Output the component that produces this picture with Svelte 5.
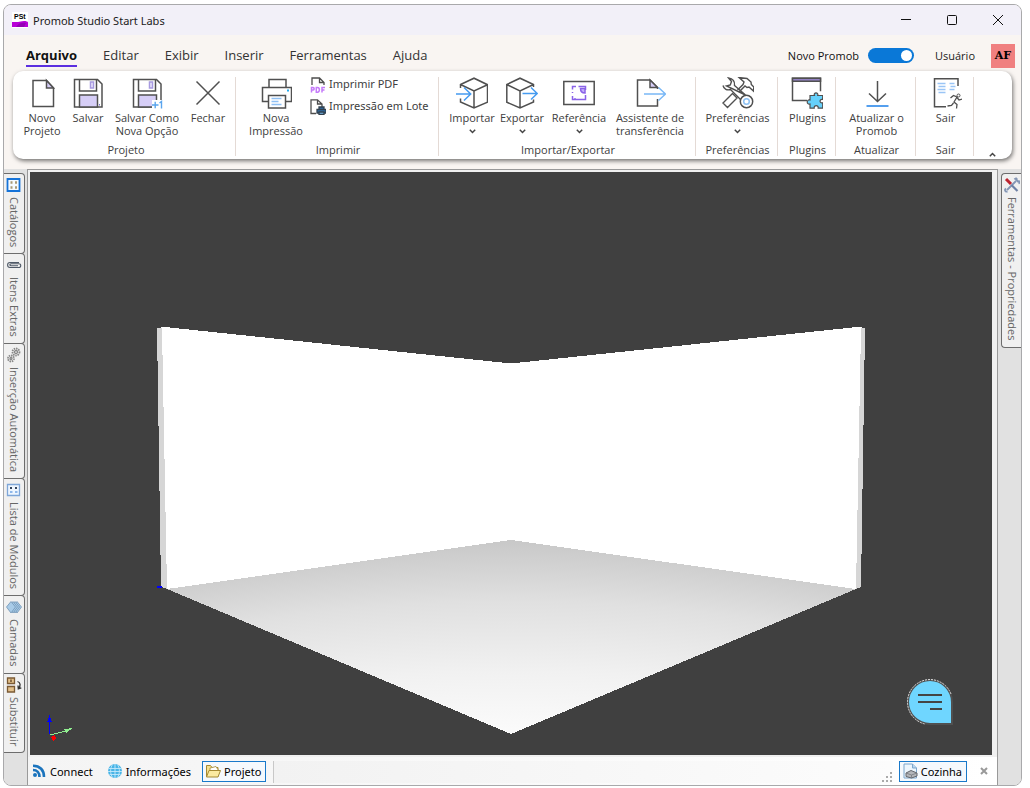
<script>
    const menu = ['Arquivo', 'Editar', 'Exibir', 'Inserir', 'Ferramentas', 'Ajuda'];

    const groups = [
        { id: 'project', label: 'Projeto', tools: [
            { icon: 'new', label: 'Novo Projeto' },
            { icon: 'save', label: 'Salvar' },
            { icon: 'saveAs', label: 'Salvar Como Nova Opção' },
            { icon: 'close', label: 'Fechar' }
        ] },
        { id: 'print', label: 'Imprimir', tools: [
            { icon: 'print', label: 'Nova Impressão' }
        ], small: [
            { icon: 'pdf', label: 'Imprimir PDF' },
            { icon: 'batch', label: 'Impressão em Lote' }
        ] },
        { id: 'transfer', label: 'Importar/Exportar', tools: [
            { icon: 'import', label: 'Importar', more: true },
            { icon: 'export', label: 'Exportar', more: true },
            { icon: 'reference', label: 'Referência', more: true },
            { icon: 'assistant', label: 'Assistente de transferência' }
        ] },
        { id: 'prefs', label: 'Preferências', tools: [{ icon: 'tools', label: 'Preferências', more: true }] },
        { id: 'plugins', label: 'Plugins', tools: [{ icon: 'plugins', label: 'Plugins' }] },
        { id: 'update', label: 'Atualizar', tools: [{ icon: 'update', label: 'Atualizar o Promob' }] },
        { id: 'exit', label: 'Sair', tools: [{ icon: 'exit', label: 'Sair' }] }
    ];

    const sideTabs = [
        { icon: 'catalog', label: 'Catálogos' },
        { icon: 'clip', label: 'Itens Extras' },
        { icon: 'gears', label: 'Inserção Automática' },
        { icon: 'list', label: 'Lista de Módulos' },
        { icon: 'layers', label: 'Camadas' },
        { icon: 'swap', label: 'Substituir' }
    ];

    let active = $state('Arquivo');
    let newPromob = $state(true);
</script>

{#snippet toolIcon(name)}
    <svg class="tool-icon" viewBox="0 0 32 32" fill="none" stroke="#505050" stroke-width="1.5" aria-hidden="true">
        {#if name === 'new'}
            <path d="M7 3.5h13.5l7 7.5v18.500H7z" />
            <path d="M20.5 3.5V11h7z" fill="#d6cef7" />
        {:else if name === 'save' || name === 'saveAs'}
            <path d="M2.5 2.5h23L30 7v23H2.5z" />
            <path d="M7.500 2.500V14h17V2.500" />
            <path d="M7.500 30V18h18v12z" fill="#d6cef7" />
            <path d="M18.500 5h3v6h-3z" fill="#ece7fc" stroke="#a79ae0" />
            {#if name === 'saveAs'}
                <path d="M21 23h11v9H21z" fill="#fff" stroke="none" />
                <path d="M21 28h6.500M24.200 24.700v6.600M28.500 26l2-1.500v7" stroke="#5aa5ee" stroke-width="1.4" />
            {:else}
                <path d="M27.500 27v1.500" stroke="#7d6fd0" stroke-width="1" />
            {/if}
        {:else if name === 'close'}
            <path d="M4.500 4.500l23 23M27.500 4.500l-23 23" />
        {:else if name === 'print'}
            <path d="M9 10V2.500h17V10M8 24.500H2.500V10.500h29v14H26" />
            <path d="M8.500 18.500h17V31h-17z" />
            <path d="M11.500 21.500h10M11.500 24.500h7M11.500 27.500h10" stroke="#8fc0f4" />
            <path d="M27 13.500h2" stroke="#23a9ee" stroke-width="2" />
        {:else if name === 'import'}
            <path d="M4.500 11V7.500L18 1.200l13.500 6.500v17.500L18 31 4.500 25v-3.500M4.500 7.500L18 14l13.500-6.300M18 14v17" />
            <path d="M0 17h14.500M8 10.500l6.700 6.500L8 23.500" stroke="#459bf0" />
        {:else if name === 'export'}
            <path d="M27.500 10V7.500L14 1.200.8 7.500v17.700L14 31l13.500-6v-2.500M.8 7.500L14 14l13.500-6.500M14 14v17" />
            <path d="M16.500 16.500H31M25 10.500l6.200 6-6.200 6" stroke="#459bf0" />
        {:else if name === 'reference'}
            <path d="M.8 4.500h30.400v23H.8z" />
            <path d="M13 9.500H9.500v3M9.500 19v3.500h13V18M15.500 9.500h7v3.500M9.500 15v1M13 22h-2" stroke="#8a63e8" />
            <path d="M17.500 11.500c0 3 2 4.500 4.500 4.500v-4.500z" fill="#c4b0fa" stroke="#8a63e8" />
        {:else if name === 'assistant'}
            <path d="M23.500 12V10.500L16 3H3.500v26h20v-7" />
            <path d="M16 3v7.500h7.500z" fill="#d6cef7" />
            <path d="M10 17h21.500M24.500 10.500l7 6.500-7 6.500" stroke="#7ab8f6" />
        {:else if name === 'tools'}
            <path d="M10.500 16.500L1 26l4.500 4.500L15 21zM17 15l6-6 2 1.500 2-.5 4.500 4 .3-4-2.500-2.500-.3-2.500-4-3.500-8-1 5 4.500-1 2.500-5.500 5.500" stroke-width="1.400" />
            <path d="M1 8.500c1 4 4 5 7.500 4l10.500 10.500M23.500 18L12.500 8.500C13 4.500 11 1.500 6.500 1l3 3.500L8.300 8 4.500 9z" stroke-width="1.400" />
            <circle cx="24.5" cy="24.500" r="6.200" fill="#fff" />
            <circle cx="24.5" cy="24.500" r="2.800" stroke="#8cc0f3" />
        {:else if name === 'plugins'}
            <path d="M16 23.500H1.500V1.200h28v13" />
            <path d="M1.500 1.200h28v3h-28z" fill="#9382c4" />
            <path d="M19 18.500h4.500c-1.500-3.500 4.500-3.500 3.200 0h5v4c-3.500-1-3.500 4.500 0 3.200v5.500h-4.500c.5-3.500-4.500-3.500-4 0H19V27c-3.700 1-3.700-5 0-4z" fill="#66d1fb" stroke-width="1.200" />
        {:else if name === 'update'}
            <path d="M16.500 4v20.500M8 16.500l8.500 8 8.500-8" />
            <path d="M5.500 29h22" stroke="#549fee" stroke-width="1.800" />
        {:else if name === 'exit'}
            <path d="M28 9V1.800H4.500v28H16" />
            <path d="M7.500 6.500h8M8.500 9.500h7M7.500 12.500h8M8.500 15.500h7M19.500 6.500h5M20.500 9.500h5M19.500 12.500h5" stroke="#9ac5f6" />
            <circle cx="28.500" cy="18.500" r="1.500" stroke-width="1" />
            <path d="M20.500 21l3-2.500 3.500 1.500-3 5 3 2.500-.5 4M23.500 26l-2 2.500-4 .5M27 20.500l2 2.500 3-1" stroke-width="1.300" />
        {/if}
    </svg>
{/snippet}

{#snippet smallIcon(name)}
    <svg class="small-icon" viewBox="0 0 16 16" fill="none" stroke="#4d4d4d" stroke-width="1.3" aria-hidden="true">
        {#if name === 'pdf'}
            <path d="M2 8V1h7.500L14 5.500V8M9.500 1v4.500H14" />
            <path d="M1.500 15.500v-5h1.700c1.300 0 1.300 2.600 0 2.600H1.500M6.300 10.500v4.700h1.200c2.500 0 2.500-4.700 0-4.700zM12 15.500v-5h3M12 13h2.500" stroke="#c57bfa" stroke-width="1.500" />
        {:else if name === 'batch'}
            <path d="M6 14.500H1V.8h6.500L12 5v3M7.500.8V5H12" />
            <path d="M7 10.500h9v3.500H7zM9 8h5v2.500H9z" fill="#2d6da8" stroke="#31404e" />
            <path d="M9 13h5v2.500H9z" fill="#79b7e8" stroke="#31404e" />
        {:else if name === 'catalog'}
            <path d="M1.500 2h12v12h-12z" fill="#f5fbff" stroke="#1673d8" stroke-width="1.8" />
            <path d="M4.500 5.500h2M9 5.500h2M4.500 10.500h2M9 10.500h2" stroke="#a89a77" stroke-width="2.400" />
        {:else if name === 'clip'}
            <path d="M13 5.500H4C.8 5.500.8 10.500 4 10.500h8.500c3 0 3-3.700 0-3.700H5c-1.500 0-1.500 2 0 2h7" stroke="#4f5967" stroke-width="1.100" />
        {:else if name === 'gears'}
            <circle cx="10" cy="5" r="3.500" stroke="#888" stroke-width="1.800" stroke-dasharray="1.500 .8" />
            <circle cx="10" cy="5" r="1.500" stroke="#888" />
            <circle cx="5" cy="11.500" r="3" stroke="#888" stroke-width="1.800" stroke-dasharray="1.500 .8" />
            <circle cx="5" cy="11.500" r="1" stroke="#888" />
        {:else if name === 'list'}
            <path d="M1.500 2.500h12v11h-12z" fill="#eef6ff" stroke="#7ea6d8" />
            <path d="M4 6h2M9 6h2" stroke="#34465e" stroke-width="2" />
            <path d="M4 10h2.500M9 10h2.500" stroke="#8fb8ea" stroke-width="2" />
        {:else if name === 'layers'}
            <g fill="#a8cbe8" stroke="#6f93b4" stroke-width=".8">
                <path d="M11 2.500l4.500 5.500-4.500 6L6.500 8z" />
                <path d="M9 2.500L13.500 8 9 14 4.500 8z" />
                <path d="M7 2.500L11.500 8 7 14 2.500 8z" />
                <path d="M5 2.500L9.500 8 5 14 .5 8z" />
            </g>
        {:else if name === 'swap'}
            <path d="M1.500 1h7v5.500h-7zM1.500 9.500h7V15h-7z" fill="#e2c08b" stroke="#7b5a34" />
            <path d="M5 2.500v2.500" stroke="#5c4022" />
            <path d="M11.500 4.500c3 1 3.500 4 1 7M12 8.500l.3 3.300 3-1" stroke="#333" />
        {:else if name === 'wrench'}
            <path d="M3 13l9-9M10.500 2.500c1-2 3-1 2 .5l1.500 1.500c1.500-1 2.500 1 .5 2M2 11.500c-2 1-.5 4 1.500 3" stroke="#8496b5" stroke-width="1.800" />
            <path d="M7.500 8l6 6" stroke="#6d80a5" stroke-width="2.200" />
            <path d="M2 2l5 5" stroke="#bd2430" stroke-width="3" />
        {:else if name === 'rss'}
            <circle cx="4" cy="12" r="2" fill="#1b74bd" stroke="none" />
            <path d="M2 7c4 0 6.500 2.500 6.500 7M2 2.800c7 0 11 4.200 11 11.200" stroke="#1b74bd" stroke-width="2.600" />
        {:else if name === 'globe'}
            <circle cx="8" cy="8" r="7" fill="#48b4e6" stroke="none" />
            <path d="M1.500 5.500h13M1 8.500h14M2.500 11.500h11M8 1v14M5.500 1.500c-2.500 4-2.500 9 0 13M10.500 1.500c2.500 4 2.500 9 0 13" stroke="#c4e9fa" stroke-width=".9" />
        {:else if name === 'folder'}
            <path d="M1.500 13.500v-11h4l1.500 2h6v9z" fill="#f5e08f" stroke="#a58a33" stroke-width="1" />
            <path d="M5 5l6-1.500 2.500 4H5z" fill="#fff" stroke="#a58a33" stroke-width=".8" />
            <path d="M1.500 14L4 7.500h11.500L13 14z" fill="#fbeaa0" stroke="#a58a33" stroke-width="1" />
        {:else if name === 'room'}
            <path d="M2 1h8.500l4 4v10H2z" fill="#edf6fd" stroke="#7da6cc" stroke-width="1" />
            <path d="M10.500 1v4h4" fill="#b9d7ef" stroke="#7da6cc" stroke-width="1" />
            <path d="M4 10l5-2.500 6 2.500v3l-5.500 2L4 13.500z" fill="#b4b6ba" stroke="#62666c" stroke-width="1" />
            <path d="M4 10l5.500 2 5.500-2M9.500 12v3" stroke="#75787e" stroke-width=".8" />
        {/if}
    </svg>
{/snippet}

<div class="page">
    <div class="window">
        <header class="titlebar">
            <svg class="logo" viewBox="0 0 16 16" aria-hidden="true">
                <path d="M0 0h16v16H0z" fill="#fff" />
                <text x="2" y="7">PSt</text>
                <path d="M0 10h6c2 0 3-1 6-1 2 0 4 .5 4 1.500V15H0z" fill="#b800d8" />
                <path d="M4 15c2-4 6-5 10-4l-2 4z" fill="#9300b5" />
            </svg>
            <span class="title">Promob Studio Start Labs</span>
            <button class="control" aria-label="Minimizar"><svg viewBox="0 0 12 12"><path d="M1 5.500h10" /></svg></button>
            <button class="control" aria-label="Maximizar"><svg viewBox="0 0 12 12"><rect x="1.5" y="1.5" width="9" height="9" rx="1" /></svg></button>
            <button class="control" aria-label="Fechar janela"><svg viewBox="0 0 12 12"><path d="M1 1l10 10M11 1L1 11" /></svg></button>
        </header>

        <div class="menubar">
            <nav>
                {#each menu as item}
                    <button class="menu-item" class:active={active === item} onclick={() => (active = item)}>{item}</button>
                {/each}
            </nav>
            <label class="switch">
                Novo Promob
                <input type="checkbox" bind:checked={newPromob} />
            </label>
            <span class="user">Usuário</span>
            <span class="avatar">AF</span>
        </div>

        <div class="ribbon">
            {#each groups as group}
                <section class="group {group.id}">
                    <div class="tools">
                        {#each group.tools as tool}
                            <button class="tool">
                                {@render toolIcon(tool.icon)}
                                <span>{tool.label}</span>
                                {#if tool.more}
                                    <svg class="chevron" viewBox="0 0 7 5" aria-hidden="true"><path d="M.8.8l2.700 2.700L6.200.8" /></svg>
                                {/if}
                            </button>
                        {/each}
                        {#if group.small}
                            <div class="small-tools">
                                {#each group.small as tool}
                                    <button class="small-tool">{@render smallIcon(tool.icon)}{tool.label}</button>
                                {/each}
                            </div>
                        {/if}
                    </div>
                    <div class="group-label">{group.label}</div>
                </section>
            {/each}
            <button class="collapse" aria-label="Recolher faixa">
                <svg class="chevron" viewBox="0 0 7 5" aria-hidden="true"><path d="M.8 4.200l2.700-2.700 2.700 2.700" /></svg>
            </button>
        </div>

        <main class="workspace">
            <aside class="side left">
                {#each sideTabs as tab}
                    <button class="side-tab">{@render smallIcon(tab.icon)}<span>{tab.label}</span></button>
                {/each}
            </aside>

            <div class="center">
                <div class="viewport">
                    <svg class="scene" viewBox="0 0 962 583" shape-rendering="crispEdges">
                        <defs>
                            <radialGradient id="floor" gradientUnits="userSpaceOnUse" cx="481" cy="2118" r="1750">
                                <stop offset=".889" stop-color="#fbfbfb" />
                                <stop offset=".925" stop-color="#f1f1f1" />
                                <stop offset=".965" stop-color="#e0e0e0" />
                                <stop offset="1" stop-color="#c8c8c8" />
                            </radialGradient>
                        </defs>
                        <!-- walls, their outer edges, then the floor -->
                        <path d="M130 155h5l346 36.500L827 155h5l-5 262H137l-5-261z" fill="#fff" />
                        <path d="M127 156h5l5 261-6-2z" fill="#d6d6d6" />
                        <path d="M835 156h-4l-5 261 5-2z" fill="#d6d6d6" />
                        <path d="M137 417l344-49 345 49-345 145z" fill="url(#floor)" />
                        <path d="M127 414h5v2h-5z" fill="#00f" />
                        <!-- axis marker -->
                        <g fill="none" stroke-width="1">
                            <path d="M19.500 562v-18" stroke="#00f" />
                            <path d="M20 563l16-4" stroke="#90ee90" />
                        </g>
                        <path d="M17 550l2.500-7 2.500 7z" fill="#00f" />
                        <path d="M34 557l9-1-7 5z" fill="#90ee90" />
                        <path d="M21 565l4-2 1 4-3 2z" fill="#f00" />
                    </svg>
                    <button class="chat" aria-label="Chat">
                        <svg viewBox="0 0 46 46" aria-hidden="true">
                            <path d="M45 23v22H23A22 22 0 1 1 45 23z" fill="#6fd6ff" stroke="#505050" stroke-width="2" />
                            <path d="M44 15A22.500 22.500 0 1 0 18 45" fill="none" stroke="#ddd" stroke-width="1" stroke-dasharray="2 1" />
                            <path d="M11 16h24M11 23h24M23 30h12" stroke="#444" stroke-width="2" />
                        </svg>
                    </button>
                </div>

                <footer class="statusbar">
                    <button class="status">{@render smallIcon('rss')}Connect</button>
                    <button class="status">{@render smallIcon('globe')}Informações</button>
                    <button class="status selected">{@render smallIcon('folder')}Projeto</button>
                    <div class="strip">
                        <svg class="grip" viewBox="0 0 11 11" aria-hidden="true">
                            <path d="M8 0h2v2H8zM8 4h2v2H8zM8 8h2v2H8zM4 4h2v2H4zM4 8h2v2H4zM0 8h2v2H0z" />
                        </svg>
                    </div>
                    <button class="status selected">{@render smallIcon('room')}Cozinha</button>
                    <button class="close-tab" aria-label="Fechar ambiente">
                        <svg viewBox="0 0 8 8"><path d="M1 1l6 6M7 1L1 7" /></svg>
                    </button>
                </footer>
            </div>

            <aside class="side right">
                <button class="side-tab">{@render smallIcon('wrench')}<span>Ferramentas - Propriedades</span></button>
            </aside>
        </main>
    </div>
</div>

<style>
    :global(body) {
        background: #fff;
    }

    .page {
        box-sizing: border-box;
        display: flex;
        min-height: 100vh;
        padding: 4px 8px 2px 3px;
        font-family: "Segoe UI", "Open Sans", "Noto Sans", sans-serif;
        font-size: 11px;
        color: #1b1b1b;
    }

    .window {
        flex: 1;
        display: flex;
        flex-direction: column;
        overflow: hidden;
        border: 1px solid #a9a9ab;
        border-radius: 8px;
        background: #f9f5f2;
    }

    button {
        padding: 0;
        border: 0;
        background: none;
        color: inherit;
        font: inherit;
    }

    svg {
        display: block;
        flex: none;
    }

    .titlebar {
        display: flex;
        align-items: center;
        height: 30px;
        padding-left: 8px;
        background: #f2f0f8;
    }

    .titlebar,
    .small-tools,
    .statusbar {
        font-family: "Segoe UI", "Noto Sans", sans-serif;
    }

    .logo {
        width: 16px;
        height: 16px;
    }

    .logo text {
        font: bold 7px "Liberation Sans", sans-serif;
    }

    .title {
        flex: 1;
        margin-left: 5px;
    }

    .control {
        display: grid;
        place-items: center;
        width: 46px;
        height: 30px;
    }

    .control svg {
        width: 12px;
        height: 12px;
        fill: none;
        stroke: #111;
    }

    .menubar {
        box-sizing: border-box;
        display: flex;
        align-items: center;
        height: 36px;
        padding: 5px 6px 0 22px;
    }

    nav {
        flex: 1;
        display: flex;
        gap: 26px;
    }

    .menu-item {
        border-bottom: 2px solid transparent;
        font-size: 13px;
        line-height: 20px;
        color: #333;
    }

    .menu-item.active {
        border-color: #5b2fe0;
        font-weight: 700;
        color: #111;
    }

    .switch {
        display: flex;
        align-items: center;
        gap: 9px;
        color: #111;
    }

    .switch input {
        appearance: none;
        display: flex;
        width: 46px;
        height: 15px;
        margin: 0;
        padding: 2px;
        border-radius: 8px;
        background: #8a8a8a;
        box-sizing: border-box;
    }

    .switch input::before {
        content: "";
        width: 11px;
        height: 11px;
        border-radius: 50%;
        background: #fff;
    }

    .switch input:checked {
        justify-content: flex-end;
        background: #0a78d7;
    }

    .user {
        margin: 0 16px 0 21px;
    }

    .avatar {
        width: 24px;
        background: #f08080;
        font: bold 11px/24px "DejaVu Serif", serif;
        text-align: center;
        color: #000;
    }

    .ribbon {
        display: flex;
        height: 88px;
        margin: 0 9px 10px;
        border-radius: 10px;
        background: #fff;
        box-shadow: 1px 2px 4px #0008;
        color: #404040;
        line-height: 13px;
    }

    .group {
        box-sizing: border-box;
        display: flex;
        flex-direction: column;
        justify-content: space-between;
        margin: 6px 0 3px;
        padding-left: 2px;
        border-right: 1px solid #e4dad5;
    }

    .tools {
        display: grid;
        justify-content: center;
    }

    .project {
        width: 223px;
        padding-left: 4px;
    }

    .project .tools {
        grid-template-columns: 46px 46px 72px 50px;
    }

    .print {
        width: 203px;
    }

    .print .tools {
        grid-template-columns: 68px 124px;
    }

    .transfer {
        width: 257px;
    }

    .transfer .tools {
        grid-template-columns: 50px 50px 64px 78px;
    }

    .prefs {
        width: 82px;
    }

    .plugins,
    .exit {
        width: 58px;
    }

    .update {
        width: 80px;
    }

    .tool {
        display: flex;
        flex-direction: column;
        align-items: center;
        gap: 2px;
    }

    .tool-icon {
        width: 32px;
        height: 32px;
    }

    .chevron {
        width: 7px;
        height: 5px;
        margin-top: 3px;
        fill: none;
        stroke: #444;
        stroke-width: 1.5px;
    }

    .small-tools {
        display: flex;
        flex-direction: column;
        gap: 6px;
    }

    .small-tool {
        display: flex;
        gap: 3px;
        white-space: nowrap;
    }

    .small-icon {
        width: 16px;
        height: 16px;
    }

    .group-label {
        text-align: center;
    }

    .collapse {
        display: flex;
        align-items: flex-end;
        padding: 0 0 2px 15px;
    }

    .workspace {
        flex: 1;
        display: flex;
        background: #e1e1e1;
    }

    .side {
        width: 23px;
        padding-top: 4px;
        flex: none;
    }

    .side-tab {
        box-sizing: border-box;
        display: flex;
        align-items: center;
        gap: 4px;
        width: 21px;
        padding: 3px 0 6px;
        margin-bottom: -1px;
        border: 1px solid #6d6d6d;
        background: #f0f0f0;
        color: #666;
        writing-mode: vertical-rl;
    }

    .left .side-tab {
        border-left: 0;
        border-radius: 0 4px 4px 0;
    }

    .right .side-tab {
        margin-left: 3px;
        border-right: 0;
        border-radius: 4px 0 0 4px;
    }

    .center {
        flex: 1;
        display: flex;
        flex-direction: column;
        border: solid #999;
        border-width: 1px 1px 0;
        background: #f0f0f0;
    }

    .viewport {
        position: relative;
        flex: 1;
        display: flex;
        margin: 2px 5px 2px 2px;
        background: #404040;
    }

    .scene {
        flex: 1;
        width: 100%;
    }

    .chat {
        position: absolute;
        right: 39px;
        bottom: 30px;
        width: 46px;
        height: 46px;
    }

    .statusbar {
        display: flex;
        align-items: center;
        height: 28px;
        background: linear-gradient(90deg, #f4f4f4, #fff);
        color: #000;
    }

    .status {
        display: flex;
        align-items: center;
        gap: 3px;
        height: 21px;
        padding: 0 4px 0 2px;
        margin-right: 6px;
        border: 1px solid transparent;
        box-sizing: border-box;
    }

    .status.selected {
        border-color: #1979ca;
        background: #f5f9fd;
    }

    .strip {
        flex: 1;
        display: flex;
        justify-content: flex-end;
        align-items: flex-end;
        align-self: stretch;
        margin: 4px 6px 2px 1px;
        border-left: 1px solid #c8c8c8;
        background: linear-gradient(90deg, #f2f2f2, #fcfcfc);
    }

    .grip {
        width: 11px;
        height: 11px;
        fill: #aaa;
    }

    .close-tab {
        padding: 0 9px 0 7px;
    }

    .close-tab svg {
        width: 8px;
        height: 8px;
        stroke: #999;
        stroke-width: 2px;
    }
</style>
